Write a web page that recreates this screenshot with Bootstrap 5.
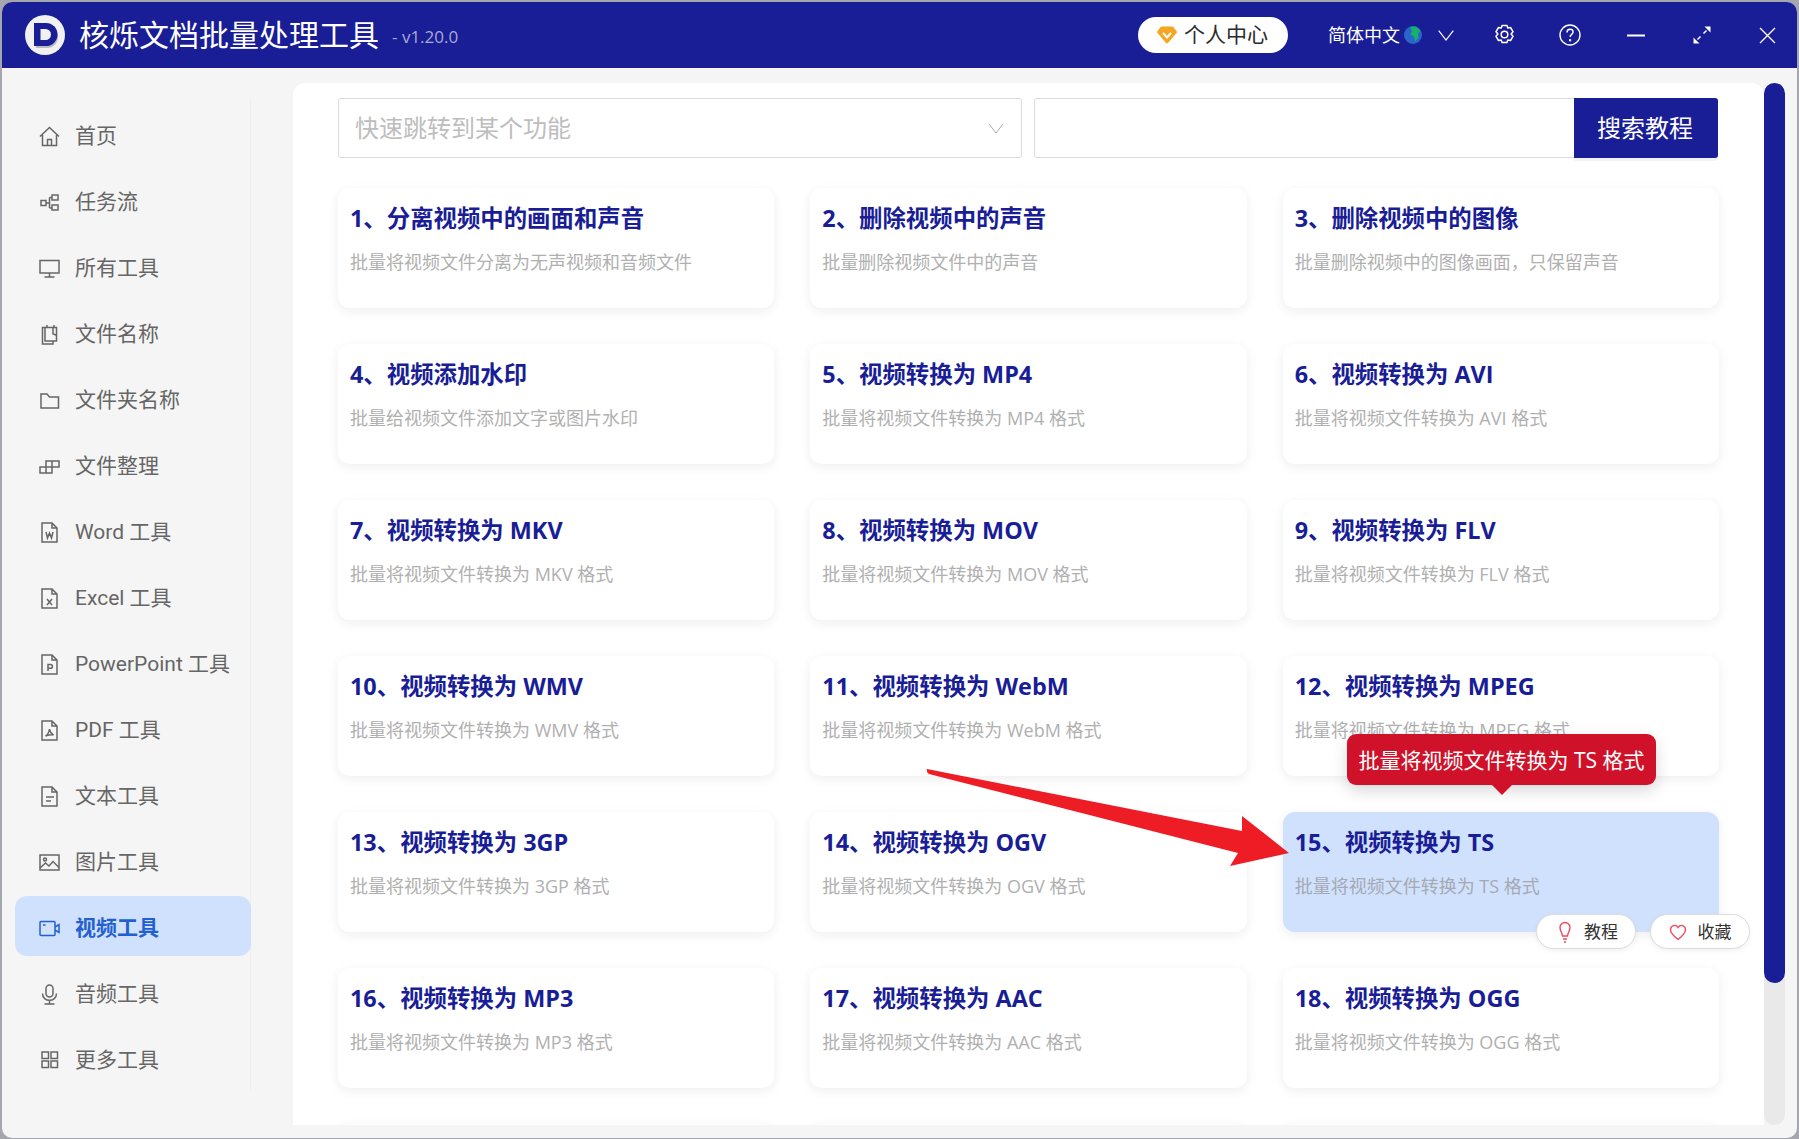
<!DOCTYPE html>
<html lang="zh-CN">
<head>
<meta charset="utf-8">
<title>核烁文档批量处理工具</title>
<link href="https://cdn.jsdelivr.net/npm/bootstrap@5.3.0/dist/css/bootstrap.min.css" rel="stylesheet">
<style>
html,body{height:100%;overflow:hidden}
body{background:#a6a6ae;font-family:"Open Sans","Noto Sans CJK SC",sans-serif;padding:2px 2px 1px 2px}
.app-win{height:1136px;background:#f5f5f5;border-radius:10px;overflow:hidden;position:relative}
.app-head{height:66px;background:#191d96;color:#fff;padding-left:23px}
.app-logo{width:40px;height:40px;flex:none}
.app-name{font-size:30px;line-height:1;margin-left:14px;white-space:nowrap}
.app-ver{font-size:17px;color:#a9aad4;margin-left:13px;padding-top:3px;white-space:nowrap}
.vip-pill{width:150px;height:36px;background:#fff;border-radius:18px;color:#2b2b2b;font-size:21px;padding-left:19px;gap:7px;margin-right:40px}
.lang-txt{font-size:18px;white-space:nowrap}
.hd-slot{flex:none;display:flex;align-items:center;justify-content:center}
.side-bar{width:249px;flex:none;padding-top:30px}
.side-list{border-right:1px solid #eee;padding:6px 0 2px 13px;gap:6px;height:992px;margin-top:0}
.side-list .nav-link{height:60px;width:236px;border-radius:12px;padding:4px 0 0 24px;color:#666;font-family:Roboto,"Noto Sans CJK SC",sans-serif;font-size:21px;display:flex;align-items:center;gap:15px;white-space:nowrap;line-height:1}
.side-list .nav-link.active{background:#d0e1fd;color:#2360cf;font-weight:700}
.side-list svg{width:21px;height:21px;flex:none;fill:none;stroke:currentColor;stroke-width:1.5}
.main-panel{width:1471px;height:1042px;margin:15px 0 0 42px;background:#fff;border-radius:12px 12px 0 0;padding:15px 45px 0;overflow:hidden;flex:none}
.find-row{height:60px;gap:12px;margin-bottom:30px}
.find-select{width:684px;flex:none;height:60px;font-size:24px;color:#bdbdbd;padding-left:16px;border:1px solid #d9d9d9;border-radius:3px;background-image:url("data:image/svg+xml,%3Csvg xmlns='http://www.w3.org/2000/svg' viewBox='0 0 16 16'%3E%3Cpath d='M1 4l7 9 7-9' fill='none' stroke='%23aaa' stroke-width='1'/%3E%3C/svg%3E");background-size:16px 16px;background-position:right 17px center}
.find-group{flex:1;padding-right:1px}
.find-input{height:60px;border:1px solid #d9d9d9;border-radius:3px 0 0 3px}
.find-btn{width:144px;height:60px;background:#191d96;color:#fff;font-size:24px;border:0;border-radius:0 3px 3px 0!important;padding:0 2px 0 0;box-shadow:0 3px 0 #f3f3f3}
.tool-grid{--bs-gutter-x:36px;--bs-gutter-y:36px}
.tool-box{height:120px;background:#fff;border:0;border-radius:12px;padding:14px 12px;box-shadow:0 3px 12px rgba(0,0,0,.07)}
.tool-box.hl{background:#d0e1fd}
.tool-title{font-size:23.4px;font-weight:700;color:#191d96;line-height:32px;margin:0;white-space:nowrap}
.tool-desc{font-size:18px;color:#b0b0b0;line-height:26px;margin:15px 0 0;white-space:nowrap}
.hl .tool-desc{color:#a5a9b3}
.scroll-track{position:absolute;left:1762px;top:81px;width:21px;height:1042px;background:#e9e9e9;border-radius:11px}
.scroll-thumb{height:900px;background:#191d96;border-radius:11px}
.red-tip{position:absolute;left:1345px;top:732px;width:309px;height:51px;background:#cf1229;color:#fff;font-size:21px;padding-top:3px;border-radius:9px;box-shadow:0 6px 16px rgba(0,0,0,.15);white-space:nowrap}
.red-tip::after{content:"";position:absolute;left:144px;top:50px;border-left:11px solid transparent;border-right:11px solid transparent;border-top:11px solid #cf1229}
.mini-btn{position:absolute;top:912px;height:35px;width:100px;background:#fff;border:1px solid #dcdcdc;border-radius:18px;color:#333;font-size:17px;gap:12px;padding:0;box-shadow:0 2px 5px rgba(0,0,0,.06)}
.mini-btn svg{width:14px;height:22px;fill:none;stroke:#ec4a5e;stroke-width:1.4}
.mini-learn{padding-left:4px}
.mini-fav{gap:11px}
.big-arrow{position:absolute;left:0;top:0;pointer-events:none}
</style>
</head>
<body>
<div class="app-win d-flex flex-column">
  <header class="app-head d-flex align-items-center flex-none">
    <svg class="app-logo" viewBox="0 0 40 40"><circle cx="20" cy="20" r="20" fill="#f1f1f1"/><path d="M11 11h11a11 11 0 0 1 0 22H11z" fill="#b9b9c4"/><path d="M9 8h12a11.500 11.500 0 0 1 0 23H9z" fill="#191d96"/><path d="M15.500 14h5a5.500 5.500 0 0 1 0 11h-5z" fill="#f1f1f1"/></svg>
    <span class="app-name">核烁文档批量处理工具</span>
    <span class="app-ver">- v1.20.0</span>
    <div class="d-flex align-items-center ms-auto">
      <div class="vip-pill d-flex align-items-center">
        <svg width="20" height="18" viewBox="0 0 20 18"><path d="M5 .5h10a2 2 0 0 1 1.600.8L19.500 5a1.500 1.500 0 0 1 0 1.900L11.200 16.700a1.600 1.600 0 0 1-2.400 0L.5 6.900A1.500 1.500 0 0 1 .5 5L3.400 1.300A2 2 0 0 1 5 .5z" fill="#f5a623"/><path d="M6 7l4 4.500L14 7" fill="none" stroke="#fff" stroke-width="2"/></svg>
        <span>个人中心</span>
      </div>
      <span class="lang-txt">简体中文</span>
      <svg class="ms-1" width="18" height="18" viewBox="0 0 18 18"><circle cx="9" cy="9" r="9" fill="#2a66c9"/><path d="M6 1l6-.5 4.500 4-2.500 3 .5 4-3.500 4-1-5-3.500-2 1.500-3.500z" fill="#17b26a"/></svg>
      <span class="hd-slot" style="width:47px"><svg width="16" height="11" viewBox="0 0 16 11"><path d="M.7.7L8 10 15.300.7" fill="none" stroke="#fff" stroke-width="1.200"/></svg></span>
      <span class="hd-slot" style="width:22px;margin-left:24px"><svg width="21" height="22" viewBox="0 0 21 22" fill="none" stroke="#fff" stroke-width="1.500"><path d="M8 1.500h5l.8 2.600 2.700-.6 2.500 4.200-1.900 2.300 1.900 2.300-2.500 4.200-2.700-.6-.8 2.600H8l-.8-2.600-2.700.6L2 12.300 3.900 10 2 7.700l2.500-4.200 2.700.6z" stroke-linejoin="round"/><circle cx="10.500" cy="10.500" r="3.300"/></svg></span>
      <span class="hd-slot" style="width:22px;margin-left:44px"><svg width="22" height="22" viewBox="0 0 22 22" fill="none" stroke="#fff" stroke-width="1.400"><circle cx="11" cy="11" r="10"/><path d="M8 8.500c0-2 1.400-3.200 3.100-3.200 1.700 0 3 1.100 3 2.700 0 2.300-3 2.500-3 5"/><circle cx="11.100" cy="16.200" r=".5"/></svg></span>
      <span class="hd-slot" style="width:18px;margin-left:46px"><svg width="18" height="3" viewBox="0 0 18 3"><path d="M0 1.500h18" stroke="#fff" stroke-width="1.800"/></svg></span>
      <span class="hd-slot" style="width:18px;margin-left:48px"><svg width="18" height="18" viewBox="0 0 18 18" fill="#fff"><path d="M11.500 .5H17.500V6.500zM.5 17.500V11.500L6.500 17.500z"/><path d="M13.500 4.500L10.500 7.500M7.500 10.500L4.500 13.500" stroke="#fff" stroke-width="1.500"/></svg></span>
      <span class="hd-slot" style="width:18px;margin-left:47px;margin-right:21px"><svg width="17" height="17" viewBox="0 0 17 17"><path d="M1 1l15 15M16 1L1 16" stroke="#fff" stroke-width="1.400"/></svg></span>
    </div>
  </header>
  <div class="d-flex flex-grow-1">
    <aside class="side-bar">
      <nav class="side-list nav flex-column flex-nowrap">
        <a class="nav-link" href="#"><svg viewBox="0 0 21 21"><path d="M1 10.500L10.500 1.500 20 10.500M3.500 9v10.500h14V9M8.500 19.500v-6h4v6"/></svg>首页</a>
        <a class="nav-link" href="#"><svg viewBox="0 0 21 21"><rect x="2" y="8.500" width="5" height="5"/><rect x="13" y="3" width="6" height="5"/><rect x="13" y="13" width="6" height="5"/><path d="M7 11h3.500M10.500 5.500v10.500M10.500 5.500H13M10.500 16H13"/></svg>任务流</a>
        <a class="nav-link" href="#"><svg viewBox="0 0 21 21"><rect x="1" y="2.500" width="19" height="12.500"/><path d="M10.500 15v4M5.500 19h10"/></svg>所有工具</a>
        <a class="nav-link" href="#"><svg viewBox="0 0 21 21"><path d="M6 3.500H3.500V20H14V17M6 3.500H17.500V17H6zM8 1v3M15 1v3M14 4v6l3 1"/></svg>文件名称</a>
        <a class="nav-link" href="#"><svg viewBox="0 0 21 21"><path d="M2 4h6l2.500 3H19.500v11H2z"/></svg>文件夹名称</a>
        <a class="nav-link" href="#"><svg viewBox="0 0 21 21"><path d="M1 11h6v6H1zM7 11h6v6H7zM7 11V5h6v6M13 5h7v6h-7"/></svg>文件整理</a>
        <a class="nav-link" href="#"><svg viewBox="0 0 21 21"><path d="M3 1h10l5 5v14H3zM13 1v5h5M7 10l1.500 6 2-5 2 5 1.500-6"/></svg>Word 工具</a>
        <a class="nav-link" href="#"><svg viewBox="0 0 21 21"><path d="M3 1h10l5 5v14H3zM13 1v5h5M8 11l5 6M13 11l-5 6"/></svg>Excel 工具</a>
        <a class="nav-link" href="#"><svg viewBox="0 0 21 21"><path d="M3 1h10l5 5v14H3zM13 1v5h5M9 17v-6.500h2.500a1.800 1.800 0 0 1 0 3.800H9"/></svg>PowerPoint 工具</a>
        <a class="nav-link" href="#"><svg viewBox="0 0 21 21"><path d="M3 1h10l5 5v14H3zM13 1v5h5M10.500 9c-.5 3-2 6-4 7 3-1 5-1.500 8-1-2-1-3.500-3-4-6z"/></svg>PDF 工具</a>
        <a class="nav-link" href="#"><svg viewBox="0 0 21 21"><path d="M3 1h10l5 5v14H3zM13 1v5h5M7 11h8M7 15h5"/></svg>文本工具</a>
        <a class="nav-link" href="#"><svg viewBox="0 0 21 21"><rect x="1" y="3" width="19" height="15"/><circle cx="6" cy="7.500" r="1.500"/><path d="M1 16l5.500-5 3.500 3 4-4.500 6 6"/></svg>图片工具</a>
        <a class="nav-link active" href="#"><svg viewBox="0 0 21 21"><rect x="1" y="3.500" width="15" height="14" rx="1"/><path d="M16 9l4-2.500v8L16 12M4 7h2.500"/></svg>视频工具</a>
        <a class="nav-link" href="#"><svg viewBox="0 0 21 21"><rect x="7" y="1" width="7" height="12" rx="3.500"/><path d="M3.500 9.500c0 9 14 9 14 0M10.500 16.500v3.500M5.500 20h10"/></svg>音频工具</a>
        <a class="nav-link" href="#"><svg viewBox="0 0 21 21"><rect x="3" y="2" width="6.500" height="6.500"/><rect x="12" y="2" width="6.500" height="6.500"/><rect x="3" y="11" width="6.500" height="6.500"/><rect x="12" y="11" width="6.500" height="6.500"/></svg>更多工具</a>
      </nav>
    </aside>
    <main class="main-panel">
      <div class="find-row d-flex">
        <select class="find-select form-select"><option>快速跳转到某个功能</option></select>
        <div class="find-group input-group">
          <input class="find-input form-control" type="text">
          <button class="find-btn btn" type="button">搜索教程</button>
        </div>
      </div>
      <div class="tool-grid row row-cols-3">
        <div class="col"><div class="tool-box card"><h5 class="tool-title">1、分离视频中的画面和声音</h5><p class="tool-desc">批量将视频文件分离为无声视频和音频文件</p></div></div>
        <div class="col"><div class="tool-box card"><h5 class="tool-title">2、删除视频中的声音</h5><p class="tool-desc">批量删除视频文件中的声音</p></div></div>
        <div class="col"><div class="tool-box card"><h5 class="tool-title">3、删除视频中的图像</h5><p class="tool-desc">批量删除视频中的图像画面，只保留声音</p></div></div>
        <div class="col"><div class="tool-box card"><h5 class="tool-title">4、视频添加水印</h5><p class="tool-desc">批量给视频文件添加文字或图片水印</p></div></div>
        <div class="col"><div class="tool-box card"><h5 class="tool-title">5、视频转换为 MP4</h5><p class="tool-desc">批量将视频文件转换为 MP4 格式</p></div></div>
        <div class="col"><div class="tool-box card"><h5 class="tool-title">6、视频转换为 AVI</h5><p class="tool-desc">批量将视频文件转换为 AVI 格式</p></div></div>
        <div class="col"><div class="tool-box card"><h5 class="tool-title">7、视频转换为 MKV</h5><p class="tool-desc">批量将视频文件转换为 MKV 格式</p></div></div>
        <div class="col"><div class="tool-box card"><h5 class="tool-title">8、视频转换为 MOV</h5><p class="tool-desc">批量将视频文件转换为 MOV 格式</p></div></div>
        <div class="col"><div class="tool-box card"><h5 class="tool-title">9、视频转换为 FLV</h5><p class="tool-desc">批量将视频文件转换为 FLV 格式</p></div></div>
        <div class="col"><div class="tool-box card"><h5 class="tool-title">10、视频转换为 WMV</h5><p class="tool-desc">批量将视频文件转换为 WMV 格式</p></div></div>
        <div class="col"><div class="tool-box card"><h5 class="tool-title">11、视频转换为 WebM</h5><p class="tool-desc">批量将视频文件转换为 WebM 格式</p></div></div>
        <div class="col"><div class="tool-box card"><h5 class="tool-title">12、视频转换为 MPEG</h5><p class="tool-desc">批量将视频文件转换为 MPEG 格式</p></div></div>
        <div class="col"><div class="tool-box card"><h5 class="tool-title">13、视频转换为 3GP</h5><p class="tool-desc">批量将视频文件转换为 3GP 格式</p></div></div>
        <div class="col"><div class="tool-box card"><h5 class="tool-title">14、视频转换为 OGV</h5><p class="tool-desc">批量将视频文件转换为 OGV 格式</p></div></div>
        <div class="col"><div class="tool-box card hl"><h5 class="tool-title">15、视频转换为 TS</h5><p class="tool-desc">批量将视频文件转换为 TS 格式</p></div></div>
        <div class="col"><div class="tool-box card"><h5 class="tool-title">16、视频转换为 MP3</h5><p class="tool-desc">批量将视频文件转换为 MP3 格式</p></div></div>
        <div class="col"><div class="tool-box card"><h5 class="tool-title">17、视频转换为 AAC</h5><p class="tool-desc">批量将视频文件转换为 AAC 格式</p></div></div>
        <div class="col"><div class="tool-box card"><h5 class="tool-title">18、视频转换为 OGG</h5><p class="tool-desc">批量将视频文件转换为 OGG 格式</p></div></div>
        <div class="col"><div class="tool-box card"></div></div>
        <div class="col"><div class="tool-box card"></div></div>
        <div class="col"><div class="tool-box card"></div></div>
      </div>
    </main>
  </div>
  <div class="scroll-track"><div class="scroll-thumb"></div></div>
  <div class="red-tip d-flex align-items-center justify-content-center">批量将视频文件转换为 TS 格式</div>
  <button class="mini-btn mini-learn btn d-flex align-items-center justify-content-center" style="left:1534px" type="button"><svg viewBox="0 0 14 22"><path d="M4.500 15C4 11 2 10 2 6.500a5 5 0 0 1 10 0C12 10 10 11 9.500 15zM5 18h4M6 21h2"/></svg>教程</button>
  <button class="mini-btn mini-fav btn d-flex align-items-center justify-content-center" style="left:1648px" type="button"><svg viewBox="0 0 18 22" style="width:18px"><path d="M9 18.500C4.500 15 1.500 12 1.500 8.500a4 4 0 0 1 7.500-2 4 4 0 0 1 7.500 2c0 3.500-3 6.500-7.500 10z"/></svg>收藏</button>
  <svg class="big-arrow" width="1795" height="1136" viewBox="2 2 1795 1136"><path d="M927 769Q926 772 929 774L1238 853 1230 866 1289 853 1242 816 1242 831z" fill="#ee1c25"/></svg>
</div>
</body>
</html>
